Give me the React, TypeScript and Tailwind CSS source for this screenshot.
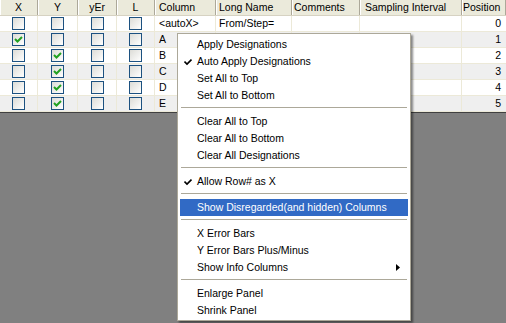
import React from "react";

const COLS = [
  { name: "X", w: 38, pad: "justify-center" },
  { name: "Y", w: 40, pad: "justify-center" },
  { name: "yEr", w: 39, pad: "justify-center" },
  { name: "L", w: 38, pad: "justify-center" },
  { name: "Column", w: 61, pad: "pl-[4px]" },
  { name: "Long Name", w: 76, pad: "pl-[3px]" },
  { name: "Comments", w: 68, pad: "pl-[2px]" },
  { name: "Sampling Interval", w: 102, pad: "pl-[5px]" },
  { name: "Position", w: 44, pad: "pl-[1px]" },
];

const ROWS = [
  { x: false, y: false, col: "<autoX>", long: "From/Step=", pos: 0 },
  { x: true, y: false, col: "A", long: "", pos: 1 },
  { x: false, y: true, col: "B", long: "", pos: 2 },
  { x: false, y: true, col: "C", long: "", pos: 3 },
  { x: false, y: true, col: "D", long: "", pos: 4 },
  { x: false, y: true, col: "E", long: "", pos: 5 },
];

type Item =
  | { sep: true }
  | { sep?: false; label: string; checked?: boolean; active?: boolean; sub?: boolean };

const MENU: Item[] = [
  { label: "Apply Designations" },
  { label: "Auto Apply Designations", checked: true },
  { label: "Set All to Top" },
  { label: "Set All to Bottom" },
  { sep: true },
  { label: "Clear All to Top" },
  { label: "Clear All to Bottom" },
  { label: "Clear All Designations" },
  { sep: true },
  { label: "Allow Row# as X", checked: true },
  { sep: true },
  { label: "Show Disregarded(and hidden) Columns", active: true },
  { sep: true },
  { label: "X Error Bars" },
  { label: "Y Error Bars Plus/Minus" },
  { label: "Show Info Columns", sub: true },
  { sep: true },
  { label: "Enlarge Panel" },
  { label: "Shrink Panel" },
];

const CheckBox = ({ checked }: { checked: boolean }) => (
  <div className="w-[13px] h-[13px] border border-[#1c5180] bg-gradient-to-br from-[#dcdcd7] to-white flex items-center justify-center">
    {checked && (
      <svg width="9" height="9" viewBox="0 0 9 9">
        <path d="M1 4 L3.5 6.5 L8 2" stroke="#21a121" strokeWidth="2" fill="none" />
      </svg>
    )}
  </div>
);

const MenuCheck = ({ color }: { color: string }) => (
  <svg width="8" height="8" viewBox="0 0 8 8" className="absolute left-[4px] top-[5px]">
    <path d="M0.5 3.5 L3 6 L7.5 1.5" stroke={color} strokeWidth="1.6" fill="none" />
  </svg>
);

export default function App() {
  return (
    <div
      className="relative w-[506px] h-[323px] bg-[#808080] overflow-hidden text-[10.5px] text-black"
      style={{ fontFamily: '"Liberation Sans", Arial, sans-serif' }}
    >
      {/* grid */}
      <div className="bg-white">
        <div className="flex h-[16px] bg-[#ebeadb] border-b border-[#d6d2c2]">
          {COLS.map((c) => (
            <div
              key={c.name}
              style={{ width: c.w }}
              className={`h-full flex items-center border-r border-[#aca899] shadow-[inset_1px_0_0_white] whitespace-nowrap overflow-hidden ${c.pad}`}
            >
              {c.name}
            </div>
          ))}
        </div>
        {ROWS.map((r, i) => (
          <div
            key={i}
            className={`flex h-[16px] border-b border-[#ece9d8] ${i % 2 ? "bg-[#efefef]" : "bg-white"}`}
          >
            <div className="w-[38px] flex items-center justify-center border-r border-[#ece9d8]">
              <CheckBox checked={r.x} />
            </div>
            <div className="w-[40px] flex items-center justify-center border-r border-[#ece9d8]">
              <CheckBox checked={r.y} />
            </div>
            <div className="w-[39px] flex items-center justify-center border-r border-[#ece9d8]">
              <CheckBox checked={false} />
            </div>
            <div className="w-[38px] flex items-center justify-center border-r border-[#ece9d8]">
              <CheckBox checked={false} />
            </div>
            <div className="w-[61px] flex items-center pl-[4px] border-r border-[#ece9d8] whitespace-nowrap">
              {r.col}
            </div>
            <div className="w-[76px] flex items-center pl-[3px] border-r border-[#ece9d8] whitespace-nowrap">
              {r.long}
            </div>
            <div className="w-[68px] border-r border-[#ece9d8]" />
            <div className="w-[102px] border-r border-[#ece9d8]" />
            <div className="w-[44px] flex items-center justify-end pr-[5px]">{r.pos}</div>
          </div>
        ))}
      </div>
      <div className="h-[1px] bg-[#404040]" />

      {/* context menu */}
      <div className="absolute left-[177px] top-[33px] w-[234px] bg-white border border-[#aca899] pt-[2px] pb-[1px] px-[2px] shadow-[2px_2px_2px_rgba(0,0,0,0.45)]">
        {MENU.map((m, i) =>
          m.sep ? (
            <div key={i} className="pt-[3px] pb-[5px] px-[1px]">
              <div className="h-[1px] bg-[#aca899]" />
            </div>
          ) : (
            <div
              key={i}
              className={`relative h-[17px] flex items-center pl-[17px] whitespace-nowrap ${
                m.active ? "bg-[#316ac5] text-white" : ""
              }`}
            >
              {m.checked && <MenuCheck color={m.active ? "white" : "black"} />}
              {m.label}
              {m.sub && (
                <svg width="4" height="7" viewBox="0 0 4 7" className="absolute right-[8px] top-[5px]">
                  <path d="M0 0 L4 3.5 L0 7 Z" fill="black" />
                </svg>
              )}
            </div>
          )
        )}
      </div>
    </div>
  );
}
